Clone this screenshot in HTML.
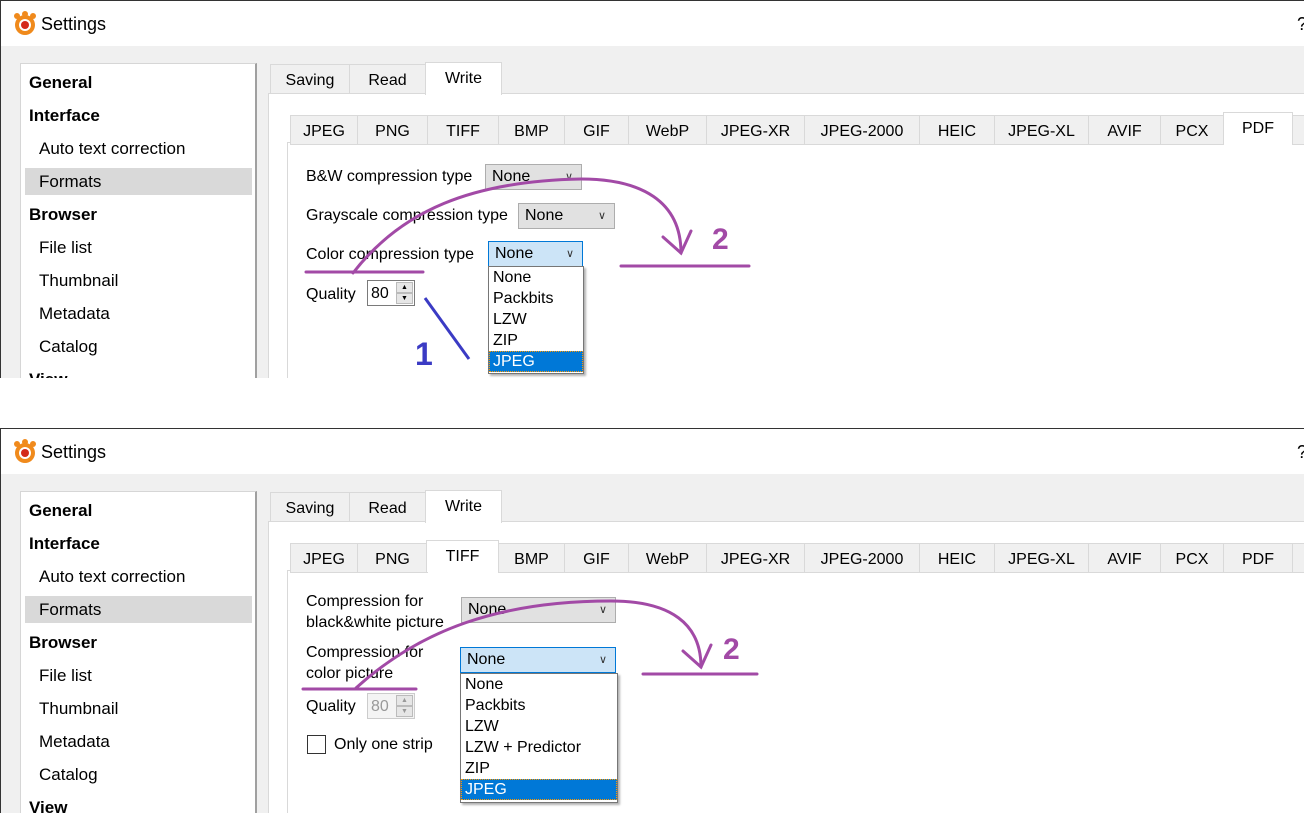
<!DOCTYPE html>
<html><head><meta charset="utf-8">
<style>
*{box-sizing:border-box;margin:0;padding:0}
body{width:1304px;height:813px;background:#fff;position:relative;overflow:hidden;font-family:"Liberation Sans",sans-serif;font-size:16px;color:#000}
.p{position:absolute;left:0;width:1304px;overflow:hidden;background:#f0f0f0;border-left:1px solid #333;border-top:1px solid #333}
.a{position:absolute;white-space:nowrap}
.tb{position:absolute;left:0;top:0;width:1304px;height:45px;background:#fff}
.list{position:absolute;left:19px;top:62px;width:237px;height:330px;background:#fff;border:1px solid #d6d6d6;border-right:2px solid #a0a0a0;overflow:hidden}
.list div{position:absolute;white-space:nowrap;font-size:17px}
.b{font-weight:bold;left:8px}
.n{left:18px}
.tab{position:absolute;height:30px;background:#f0f0f0;border:1px solid #d9d9d9;text-align:center;line-height:31px;font-size:16px}
.sel{background:#fff;border-bottom:none}
.cb{position:absolute;height:26px;background:#e1e1e1;border:1px solid #adadad;line-height:24px;padding-left:6px;font-size:16px}
.cb.blue{background:#cce4f7;border-color:#0078d7}
.cb i{position:absolute;right:8px;top:0;font-style:normal;font-size:11px;color:#333}
.dd{position:absolute;background:#fff;border:1px solid #767676;box-shadow:2px 2px 2px rgba(0,0,0,.3);font-size:16px}
.dd div{height:21px;line-height:21px;padding-left:4px}
.dd .h{background:#0078d7;color:#fff;outline:1px dotted #f90;outline-offset:-1px}
.spin{position:absolute;width:48px;height:26px;border:1px solid #7a7a7a;background:#fff;font-size:16px;line-height:26px;padding-left:3px}
.spin b{position:absolute;right:1px;width:17px;height:11px;background:#e6e6e6;border:1px solid #bbb;font-size:7px;text-align:center;line-height:10px;font-weight:normal}
.lb{position:absolute;white-space:nowrap;line-height:20px}
</style></head><body>

<!-- PANEL 1 -->
<div class="p" style="top:0;height:378px">
 <div class="tb"></div>
 <svg class="a" style="left:11px;top:10px" width="26" height="26" viewBox="0 0 26 26"><g fill="#f08a1c"><circle cx="13" cy="14" r="10"/><circle cx="5" cy="5" r="3"/><circle cx="13" cy="3" r="3"/><circle cx="21" cy="5" r="3"/></g><circle cx="13" cy="14" r="6" fill="#fff"/><circle cx="13" cy="14" r="4" fill="#d42a1a"/></svg>
 <div class="a" style="left:40px;top:13px;font-size:18px">Settings</div>
 <div class="a" style="left:1296px;top:13px;font-size:18px">?</div>
 <div class="list">
  <div class="b" style="top:9px">General</div>
  <div class="b" style="top:42px">Interface</div>
  <div class="n" style="top:75px">Auto text correction</div>
  <div style="left:4px;top:104px;width:227px;height:27px;background:#d9d9d9"></div>
  <div class="n" style="top:108px">Formats</div>
  <div class="b" style="top:141px">Browser</div>
  <div class="n" style="top:174px">File list</div>
  <div class="n" style="top:207px">Thumbnail</div>
  <div class="n" style="top:240px">Metadata</div>
  <div class="n" style="top:273px">Catalog</div>
  <div class="b" style="top:306px">View</div>
 </div>
 <div class="a" style="left:267px;top:92px;width:1040px;height:300px;background:#fff;border-top:1px solid #d9d9d9;border-left:1px solid #d9d9d9"></div>
 <div class="tab" style="left:269px;top:63px;width:80px">Saving</div>
 <div class="tab" style="left:348px;top:63px;width:77px">Read</div>
 <div class="tab sel" style="left:424px;top:61px;width:77px;height:33px">Write</div>
 <div class="a" style="left:286px;top:141px;width:1020px;height:300px;border-left:1px solid #d9d9d9;border-top:1px solid #d9d9d9"></div>
 <div class="tab" style="left:289px;top:114px;width:68px">JPEG</div>
 <div class="tab" style="left:356px;top:114px;width:71px">PNG</div>
 <div class="tab" style="left:426px;top:114px;width:72px">TIFF</div>
 <div class="tab" style="left:497px;top:114px;width:67px">BMP</div>
 <div class="tab" style="left:563px;top:114px;width:65px">GIF</div>
 <div class="tab" style="left:627px;top:114px;width:79px">WebP</div>
 <div class="tab" style="left:705px;top:114px;width:99px">JPEG-XR</div>
 <div class="tab" style="left:803px;top:114px;width:116px">JPEG-2000</div>
 <div class="tab" style="left:918px;top:114px;width:76px">HEIC</div>
 <div class="tab" style="left:993px;top:114px;width:95px">JPEG-XL</div>
 <div class="tab" style="left:1087px;top:114px;width:73px">AVIF</div>
 <div class="tab" style="left:1159px;top:114px;width:64px">PCX</div>
 <div class="tab sel" style="left:1222px;top:111px;width:70px;height:32px">PDF</div>
 <div class="tab" style="left:1291px;top:114px;width:30px"></div>

 <div class="lb" style="left:305px;top:166px">B&amp;W compression type</div>
 <div class="cb" style="left:484px;top:163px;width:97px">None<i>&#8744;</i></div>
 <div class="lb" style="left:305px;top:205px">Grayscale compression type</div>
 <div class="cb" style="left:517px;top:202px;width:97px">None<i>&#8744;</i></div>
 <div class="lb" style="left:305px;top:244px">Color compression type</div>
 <div class="cb blue" style="left:487px;top:240px;width:95px">None<i>&#8744;</i></div>
 <div class="dd" style="left:487px;top:265px;width:96px;height:108px">
  <div>None</div><div>Packbits</div><div>LZW</div><div>ZIP</div><div class="h">JPEG</div>
 </div>
 <div class="lb" style="left:305px;top:284px">Quality</div>
 <div class="spin" style="left:366px;top:279px">80<b style="top:1px">&#9650;</b><b style="top:12px">&#9660;</b></div>
 <svg class="a" style="left:0;top:0" width="1304" height="378">
  <g stroke="#a24aa6" stroke-width="3" fill="none" stroke-linecap="round">
   <path d="M305 271 L422 271"/>
   <path d="M620 265 L748 265"/>
   <path d="M352 272 C400 210 470 180 580 178 C640 178 680 200 680 252"/>
   <path d="M662 236 L680 252 L690 230"/>
  </g>
  <text x="711" y="248" font-family="Liberation Sans" font-weight="bold" font-size="30" fill="#a24aa6">2</text>
  <path d="M424 297 L468 358" stroke="#3b3bc4" stroke-width="3"/>
  <text x="414" y="364" font-family="Liberation Sans" font-weight="bold" font-size="32" fill="#3b3bc4">1</text>
 </svg>
</div>

<!-- PANEL 2 -->
<div class="p" style="top:428px;height:385px">
 <div class="tb"></div>
 <svg class="a" style="left:11px;top:10px" width="26" height="26" viewBox="0 0 26 26"><g fill="#f08a1c"><circle cx="13" cy="14" r="10"/><circle cx="5" cy="5" r="3"/><circle cx="13" cy="3" r="3"/><circle cx="21" cy="5" r="3"/></g><circle cx="13" cy="14" r="6" fill="#fff"/><circle cx="13" cy="14" r="4" fill="#d42a1a"/></svg>
 <div class="a" style="left:40px;top:13px;font-size:18px">Settings</div>
 <div class="a" style="left:1296px;top:13px;font-size:18px">?</div>
 <div class="list">
  <div class="b" style="top:9px">General</div>
  <div class="b" style="top:42px">Interface</div>
  <div class="n" style="top:75px">Auto text correction</div>
  <div style="left:4px;top:104px;width:227px;height:27px;background:#d9d9d9"></div>
  <div class="n" style="top:108px">Formats</div>
  <div class="b" style="top:141px">Browser</div>
  <div class="n" style="top:174px">File list</div>
  <div class="n" style="top:207px">Thumbnail</div>
  <div class="n" style="top:240px">Metadata</div>
  <div class="n" style="top:273px">Catalog</div>
  <div class="b" style="top:306px">View</div>
 </div>
 <div class="a" style="left:267px;top:92px;width:1040px;height:300px;background:#fff;border-top:1px solid #d9d9d9;border-left:1px solid #d9d9d9"></div>
 <div class="tab" style="left:269px;top:63px;width:80px">Saving</div>
 <div class="tab" style="left:348px;top:63px;width:77px">Read</div>
 <div class="tab sel" style="left:424px;top:61px;width:77px;height:33px">Write</div>
 <div class="a" style="left:286px;top:141px;width:1020px;height:300px;border-left:1px solid #d9d9d9;border-top:1px solid #d9d9d9"></div>
 <div class="tab" style="left:289px;top:114px;width:68px">JPEG</div>
 <div class="tab" style="left:356px;top:114px;width:71px">PNG</div>
 <div class="tab sel" style="left:425px;top:111px;width:73px;height:32px">TIFF</div>
 <div class="tab" style="left:497px;top:114px;width:67px">BMP</div>
 <div class="tab" style="left:563px;top:114px;width:65px">GIF</div>
 <div class="tab" style="left:627px;top:114px;width:79px">WebP</div>
 <div class="tab" style="left:705px;top:114px;width:99px">JPEG-XR</div>
 <div class="tab" style="left:803px;top:114px;width:116px">JPEG-2000</div>
 <div class="tab" style="left:918px;top:114px;width:76px">HEIC</div>
 <div class="tab" style="left:993px;top:114px;width:95px">JPEG-XL</div>
 <div class="tab" style="left:1087px;top:114px;width:73px">AVIF</div>
 <div class="tab" style="left:1159px;top:114px;width:64px">PCX</div>
 <div class="tab" style="left:1222px;top:114px;width:70px">PDF</div>
 <div class="tab" style="left:1291px;top:114px;width:30px"></div>

 <div class="lb" style="left:305px;top:162px;line-height:21px">Compression for<br>black&amp;white picture</div>
 <div class="cb" style="left:460px;top:168px;width:155px">None<i>&#8744;</i></div>
 <div class="lb" style="left:305px;top:213px;line-height:21px">Compression for<br>color picture</div>
 <div class="cb blue" style="left:459px;top:218px;width:156px">None<i>&#8744;</i></div>
 <div class="dd" style="left:459px;top:244px;width:158px;height:130px">
  <div>None</div><div>Packbits</div><div>LZW</div><div>LZW + Predictor</div><div>ZIP</div><div class="h">JPEG</div>
 </div>
 <div class="lb" style="left:305px;top:268px">Quality</div>
 <div class="spin" style="left:366px;top:264px;color:#999;border-color:#ccc;background:#f4f4f4">80<b style="top:1px;color:#999">&#9650;</b><b style="top:12px;color:#999">&#9660;</b></div>
 <div class="a" style="left:306px;top:306px;width:19px;height:19px;border:1px solid #333;background:#fff"></div>
 <div class="lb" style="left:333px;top:306px">Only one strip</div>
 <svg class="a" style="left:0;top:0" width="1304" height="385">
  <g stroke="#a24aa6" stroke-width="3" fill="none" stroke-linecap="round">
   <path d="M302 260 L415 260"/>
   <path d="M642 245 L756 245"/>
   <path d="M355 259 C420 200 500 172 610 172 C670 172 700 195 700 238"/>
   <path d="M682 222 L700 238 L710 216"/>
  </g>
  <text x="722" y="230" font-family="Liberation Sans" font-weight="bold" font-size="30" fill="#a24aa6">2</text>
 </svg>
</div>
</body></html>
